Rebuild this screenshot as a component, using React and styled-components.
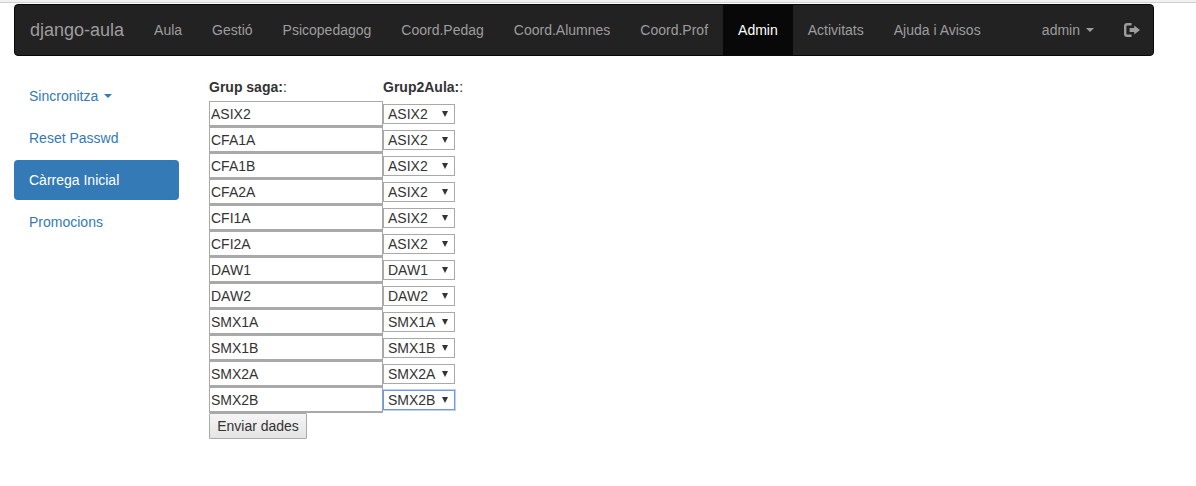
import React from 'react';
import styled, { createGlobalStyle } from 'styled-components';

const GlobalStyle = createGlobalStyle`
  html, body { margin: 0; padding: 0; background: #fff; }
  body {
    font-family: "Liberation Sans", Arial, sans-serif;
    font-size: 14px;
    line-height: 20px;
    color: #333;
  }
`;

const TopStrip = styled.div`
  height: 2px;
  background: #f1f1f1;
  border-bottom: 1px solid #d0d0d0;
`;

const Page = styled.div`
  padding: 1px 42px 0 14px;
`;

const Navbar = styled.nav`
  display: flex;
  align-items: stretch;
  height: 50px;
  background: #222;
  border: 1px solid #080808;
  border-radius: 4px;
`;

const Brand = styled.a`
  padding: 15px;
  font-size: 18px;
  line-height: 20px;
  color: #9d9d9d;
`;

const NavList = styled.div`
  display: flex;
  flex: 1;
`;

const NavItem = styled.a`
  display: flex;
  align-items: center;
  gap: 6px;
  padding: 0 15px;
  color: ${props => (props.active ? '#fff' : '#9d9d9d')};
  background: ${props => (props.active ? '#080808' : 'transparent')};
  margin-left: ${props => (props.right ? 'auto' : '0')};
`;

const LogoutItem = styled(NavItem)`
  padding: 0 13px 0 15px;
`;

const Caret = styled.span`
  display: inline-block;
  width: 0;
  height: 0;
  border-top: 4px solid ${props => props.color};
  border-left: 4px solid transparent;
  border-right: 4px solid transparent;
`;

const Content = styled.div`
  display: flex;
  margin-top: 20px;
`;

const Sidebar = styled.div`
  width: 165px;
  margin-right: 30px;
  display: flex;
  flex-direction: column;
  gap: 2px;
`;

const SideLink = styled.a`
  display: flex;
  align-items: center;
  gap: 6px;
  height: 40px;
  padding: 0 15px;
  border-radius: 4px;
  color: ${props => (props.active ? '#fff' : '#337ab7')};
  background: ${props => (props.active ? '#337ab7' : 'transparent')};
`;

const FormTable = styled.div`
  display: grid;
  grid-template-columns: 174px auto;
  justify-content: start;
  align-items: center;
  padding-top: 1px;
`;

const Head = styled.div`
  height: 20px;
  margin-bottom: 4px;
  font-weight: 700;
  span { font-weight: 400; }
`;

const TextBox = styled.input`
  box-sizing: border-box;
  width: 174px;
  height: 26px;
  margin: 0;
  padding: 1px;
  border-style: solid;
  border-color: #a9a9a9;
  border-width: 1px 1px 2px 1px;
  font-family: "Liberation Sans", Arial, sans-serif;
  font-size: 14px;
  color: #333;
  outline: none;
`;

const Picker = styled.div`
  box-sizing: border-box;
  display: flex;
  align-items: center;
  justify-content: space-between;
  width: 72px;
  height: 20px;
  padding: 0 6px 0 4px;
  border: 1px solid ${props => (props.focused ? '#6f9ae0' : '#a9a9a9')};
  box-shadow: ${props => (props.focused ? '0 0 0 1px rgba(111, 154, 224, 0.45)' : 'none')};
  background: #fff;
  line-height: 18px;
`;

const Arrow = styled.span`
  width: 0;
  height: 0;
  border-top: 6px solid #333;
  border-left: 3px solid transparent;
  border-right: 3px solid transparent;
`;

const SendButton = styled.button`
  box-sizing: border-box;
  grid-column: 1 / span 2;
  justify-self: start;
  width: 98px;
  height: 26px;
  padding: 0;
  border: 1px solid #a9a9a9;
  border-radius: 1px;
  background: linear-gradient(#f5f5f5, #e4e4e4);
  font-family: "Liberation Sans", Arial, sans-serif;
  font-size: 14px;
  color: #333;
`;

const LogoutIcon = () => (
  <svg width="16" height="14" viewBox="0 0 16 14">
    <path d="M7.5 0H3C1.3 0 0 1.3 0 3v8c0 1.7 1.3 3 3 3h4.5v-2.4H3.4c-.6 0-1-.4-1-1V3.4c0-.6.4-1 1-1h4.1z" fill="#9d9d9d" />
    <path d="M10.2 2.4 16 7l-5.8 4.6V9H5.6V5h4.6z" fill="#9d9d9d" />
  </svg>
);

const navLinks = ['Aula', 'Gestió', 'Psicopedagog', 'Coord.Pedag', 'Coord.Alumnes', 'Coord.Prof', 'Admin', 'Activitats', 'Ajuda i Avisos'];

const rows = [
  ['ASIX2', 'ASIX2'],
  ['CFA1A', 'ASIX2'],
  ['CFA1B', 'ASIX2'],
  ['CFA2A', 'ASIX2'],
  ['CFI1A', 'ASIX2'],
  ['CFI2A', 'ASIX2'],
  ['DAW1', 'DAW1'],
  ['DAW2', 'DAW2'],
  ['SMX1A', 'SMX1A'],
  ['SMX1B', 'SMX1B'],
  ['SMX2A', 'SMX2A'],
  ['SMX2B', 'SMX2B'],
];

const App = () => (
  <>
    <GlobalStyle />
    <TopStrip />
    <Page>
      <Navbar>
        <Brand>django-aula</Brand>
        <NavList>
          {navLinks.map(link => (
            <NavItem key={link} active={link === 'Admin'}>{link}</NavItem>
          ))}
          <NavItem right>admin <Caret color="#9d9d9d" /></NavItem>
          <LogoutItem><LogoutIcon /></LogoutItem>
        </NavList>
      </Navbar>
      <Content>
        <Sidebar>
          <SideLink>Sincronitza <Caret color="#337ab7" /></SideLink>
          <SideLink>Reset Passwd</SideLink>
          <SideLink active>Càrrega Inicial</SideLink>
          <SideLink>Promocions</SideLink>
        </Sidebar>
        <FormTable>
          <Head>Grup saga:<span>:</span></Head>
          <Head>Grup2Aula:<span>:</span></Head>
          {rows.map(([saga, aula], i) => (
            <React.Fragment key={saga}>
              <TextBox defaultValue={saga} />
              <Picker focused={i === rows.length - 1}>{aula}<Arrow /></Picker>
            </React.Fragment>
          ))}
          <SendButton>Enviar dades</SendButton>
        </FormTable>
      </Content>
    </Page>
  </>
);

export default App;
